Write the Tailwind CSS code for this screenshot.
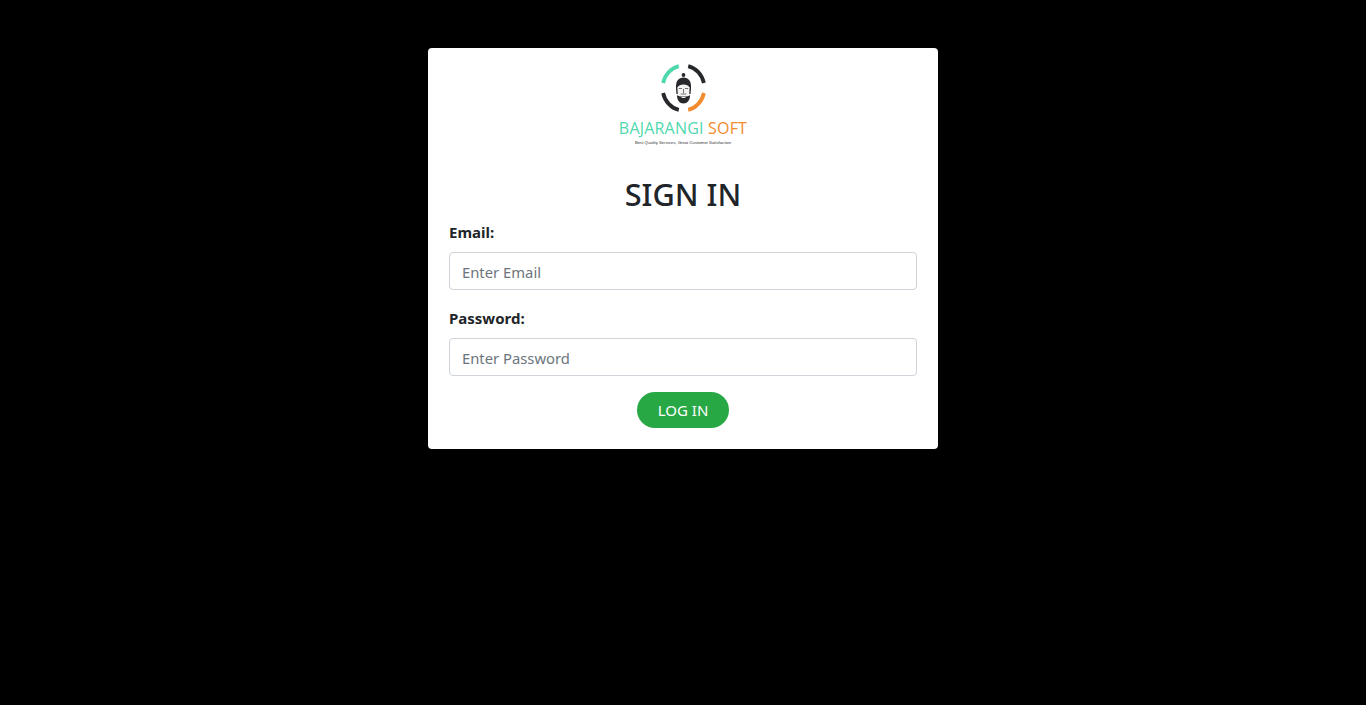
<!DOCTYPE html>
<html lang="en">
<head>
    <meta charset="UTF-8">
    <title>Sign In</title>
    <script src="https://cdn.jsdelivr.net/npm/@tailwindcss/browser@4"></script>
</head>
<body class="bg-black min-h-screen font-['Noto_Sans',sans-serif]">
    <div class="pt-12">
        <div class="w-[510px] h-[401px] mx-auto bg-white rounded-[4px] px-[21px] pt-[15px]">
            <!-- Logo -->
            <div class="flex flex-col items-center h-[112px]">
                <svg class="w-[47px] h-[50px]" viewBox="0 0 50 50" preserveAspectRatio="none" fill="none">
                    <g stroke-width="4" fill="none">
                        <path d="M3.3 20A22.5 22.5 0 0 1 20 3.1" stroke="#4fd8ae"/>
                        <path d="M30 3.1A22.5 22.5 0 0 1 46.7 20" stroke="#26282b"/>
                        <path d="M3.3 30A22.5 22.5 0 0 0 20 46.9" stroke="#26282b"/>
                        <path d="M46.7 30A22.5 22.5 0 0 1 30 46.9" stroke="#f28a2e"/>
                    </g>
                    <circle cx="25" cy="12" r="2" fill="#26282b"/>
                    <path d="M17 25C16.5 18 20 14.5 25 14.5S33.5 18 33 25L32.5 31H17.5Z" fill="#26282b"/>
                    <path d="M18.5 24.5C20.5 20.5 29.5 20.5 31.5 24.5L31 33H19Z" fill="#f4f4f4"/>
                    <path d="M20 25.5H23.5M26.5 25.5H30M25 26V30M22 31H28" stroke="#6a6d70" stroke-width="1"/>
                    <path d="M18 32C20 34 30 34 32 32C32 37 29 40.5 25 40.5S18 37 18 32Z" fill="#26282b"/>
                    <path d="M23 34.5H27" stroke="#f4f4f4" stroke-width="1"/>
                </svg>
                <p class="mt-[5px] text-[16px] leading-[20px] tracking-[0.2px] font-['Open_Sans',sans-serif] whitespace-nowrap"><span class="text-[#4fd8ae]">BAJARANGI</span> <span class="text-[#f28a2e]">SOFT</span></p>
                <p class="mt-[1px] text-[4.25px] leading-[8px] text-[#333] font-['Liberation_Sans',sans-serif] whitespace-nowrap">Best Quality Services, Great Customer Satisfaction</p>
            </div>

            <h1 class="text-[30.7px] leading-[38px] font-medium text-[#212529] text-center mb-[7px]">SIGN IN</h1>

            <form>
                <label class="block text-[15px] leading-[24px] font-bold text-[#212529] mb-[8px]">Email:</label>
                <input type="text" placeholder="Enter Email" class="block w-full h-[38px] px-[12px] pt-[2px] text-[14.8px] border border-[#ced4da] rounded-[4px] placeholder:text-[#6c757d] mb-[16px]">

                <label class="block text-[15px] leading-[24px] font-bold text-[#212529] mb-[8px]">Password:</label>
                <input type="password" placeholder="Enter Password" class="block w-full h-[38px] px-[12px] pt-[2px] text-[14.8px] border border-[#ced4da] rounded-[4px] placeholder:text-[#6c757d] mb-[16px]">

                <div class="flex justify-center">
                    <button type="button" class="w-[92px] h-[36px] bg-[#28a745] text-white text-[15px] rounded-full">LOG IN</button>
                </div>
            </form>
        </div>
    </div>
</body>
</html>
